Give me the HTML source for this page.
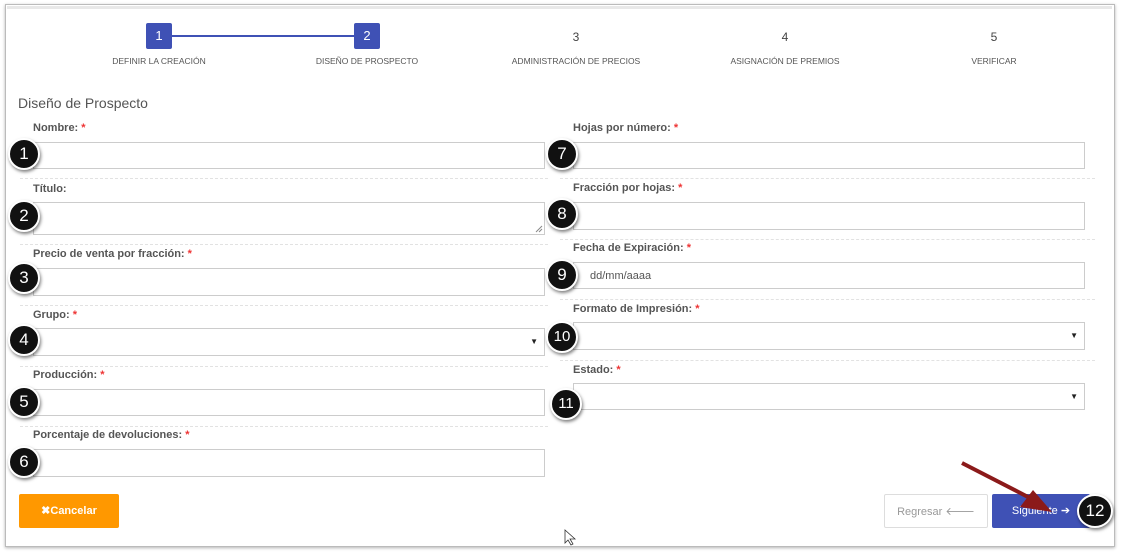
<!DOCTYPE html>
<html><head><meta charset="utf-8"><style>
*{box-sizing:border-box}
body{margin:0;width:1121px;height:552px;background:#fff;font-family:"Liberation Sans",sans-serif;position:relative;overflow:hidden}
.frame{position:absolute;left:5px;top:4px;width:1110px;height:543px;border:1px solid #bbb;box-shadow:0 1px 3px rgba(0,0,0,.3)}
.topbar{position:absolute;left:7px;top:6px;width:1105px;height:3px;background:#e8e8e8}
.step{position:absolute;width:26px;height:26px;background:#3f51b5;color:#fff;font-size:13px;text-align:center;line-height:26px;border-radius:2px;top:23px}
.num{position:absolute;top:30px;font-size:12px;color:#444;width:20px;text-align:center}
.sl{position:absolute;top:56px;font-size:8.5px;color:#555;text-align:center;width:200px}
.line{position:absolute;left:172px;top:35px;width:182px;height:2px;background:#3f51b5}
h3{position:absolute;left:18px;top:95px;margin:0;font-size:14px;font-weight:normal;color:#555}
.lb{position:absolute;font-size:11px;font-weight:bold;color:#555}
.lb i{color:#e33;font-style:normal}
.in{position:absolute;height:27px;border:1px solid #ccc;background:#fff;font-size:11px;color:#555;padding:7px 0 0 12px}
.L{left:33px;width:512px}.R{left:573px;width:512px}
.sel::after{content:"▼";position:absolute;right:6px;top:8px;font-size:8px;color:#222}
.dash{position:absolute;border-top:1px dashed #e2e2e2;height:0}
.b{position:absolute;width:32px;height:32px;border-radius:50%;background:#111;border:2px solid #fff;box-shadow:1px 2px 3px rgba(0,0,0,.5);color:#fff;font-size:17px;text-align:center;line-height:28px}
.btn{position:absolute;top:494px;height:34px;font-size:11px;text-align:center;line-height:34px;border-radius:2px}
</style></head><body>
<div class="frame"></div><div class="topbar"></div>
<div class="line"></div>
<div class="step" style="left:146px">1</div><div class="step" style="left:354px">2</div>
<div class="num" style="left:566px">3</div><div class="num" style="left:775px">4</div><div class="num" style="left:984px">5</div>
<div class="sl" style="left:59px">DEFINIR LA CREACIÓN</div>
<div class="sl" style="left:267px">DISEÑO DE PROSPECTO</div>
<div class="sl" style="left:476px">ADMINISTRACIÓN DE PRECIOS</div>
<div class="sl" style="left:685px">ASIGNACIÓN DE PREMIOS</div>
<div class="sl" style="left:894px">VERIFICAR</div>
<h3>Diseño de Prospecto</h3>

<div class="lb" style="left:33px;top:122px">Nombre: <i>*</i></div><div class="in L" style="top:142px"></div>
<div class="lb" style="left:33px;top:183px">Título:</div><div class="in L" style="top:202px;height:33px"><svg style="position:absolute;right:1px;bottom:1px" width="8" height="8"><path d="M7 1L1 7M7 4L4 7" stroke="#888"/></svg></div>
<div class="lb" style="left:33px;top:248px">Precio de venta por fracción: <i>*</i></div><div class="in L" style="top:268px;height:28px"></div>
<div class="lb" style="left:33px;top:309px">Grupo: <i>*</i></div><div class="in L sel" style="top:328px;height:28px"></div>
<div class="lb" style="left:33px;top:369px">Producción: <i>*</i></div><div class="in L" style="top:389px"></div>
<div class="lb" style="left:33px;top:429px">Porcentaje de devoluciones: <i>*</i></div><div class="in L" style="top:449px;height:28px"></div>

<div class="lb" style="left:573px;top:122px">Hojas por número: <i>*</i></div><div class="in R" style="top:142px"></div>
<div class="lb" style="left:573px;top:182px">Fracción por hojas: <i>*</i></div><div class="in R" style="top:202px;height:28px"></div>
<div class="lb" style="left:573px;top:242px">Fecha de Expiración: <i>*</i></div><div class="in R" style="top:262px;padding-left:16px">dd/mm/aaaa</div>
<div class="lb" style="left:573px;top:303px">Formato de Impresión: <i>*</i></div><div class="in R sel" style="top:322px;height:28px"></div>
<div class="lb" style="left:573px;top:364px">Estado: <i>*</i></div><div class="in R sel" style="top:383px"></div>

<div class="dash" style="left:20px;top:178px;width:528px"></div>
<div class="dash" style="left:20px;top:244px;width:528px"></div>
<div class="dash" style="left:20px;top:305px;width:528px"></div>
<div class="dash" style="left:20px;top:366px;width:528px"></div>
<div class="dash" style="left:20px;top:426px;width:528px"></div>
<div class="dash" style="left:560px;top:178px;width:535px"></div>
<div class="dash" style="left:560px;top:239px;width:535px"></div>
<div class="dash" style="left:560px;top:299px;width:535px"></div>
<div class="dash" style="left:560px;top:360px;width:535px"></div>

<div class="b" style="left:8px;top:138px">1</div>
<div class="b" style="left:8px;top:200px">2</div>
<div class="b" style="left:8px;top:262px">3</div>
<div class="b" style="left:8px;top:324px">4</div>
<div class="b" style="left:8px;top:386px">5</div>
<div class="b" style="left:8px;top:446px">6</div>
<div class="b" style="left:546px;top:138px">7</div>
<div class="b" style="left:546px;top:198px">8</div>
<div class="b" style="left:546px;top:259px">9</div>
<div class="b" style="left:546px;top:321px;font-size:15px">10</div>
<div class="b" style="left:550px;top:388px;font-size:15px">11</div>

<div class="btn" style="left:19px;width:100px;background:#ff9800;color:#fff;font-weight:bold">✖Cancelar</div>
<div class="btn" style="left:884px;width:104px;border:1px solid #ddd;color:#999">Regresar 🡐</div>
<div class="btn" style="left:992px;width:98px;background:#3f51b5;color:#fff">Siguiente ➔</div>
<div class="b" style="left:1077px;top:494px;width:36px;height:34px;font-size:17px;line-height:30px">12</div>
<svg style="position:absolute;left:0;top:0" width="1121" height="552"><line x1="962" y1="463" x2="1030" y2="498" stroke="#8b1a1a" stroke-width="4"/><polygon points="1052,512 1020,507 1033,490" fill="#8b1a1a"/>
<path d="M565 530 L565 543 L568 540 L571 545 L573 544 L570 539 L575 539 Z" fill="#fff" stroke="#333" stroke-width="0.8"/></svg>
</body></html>
